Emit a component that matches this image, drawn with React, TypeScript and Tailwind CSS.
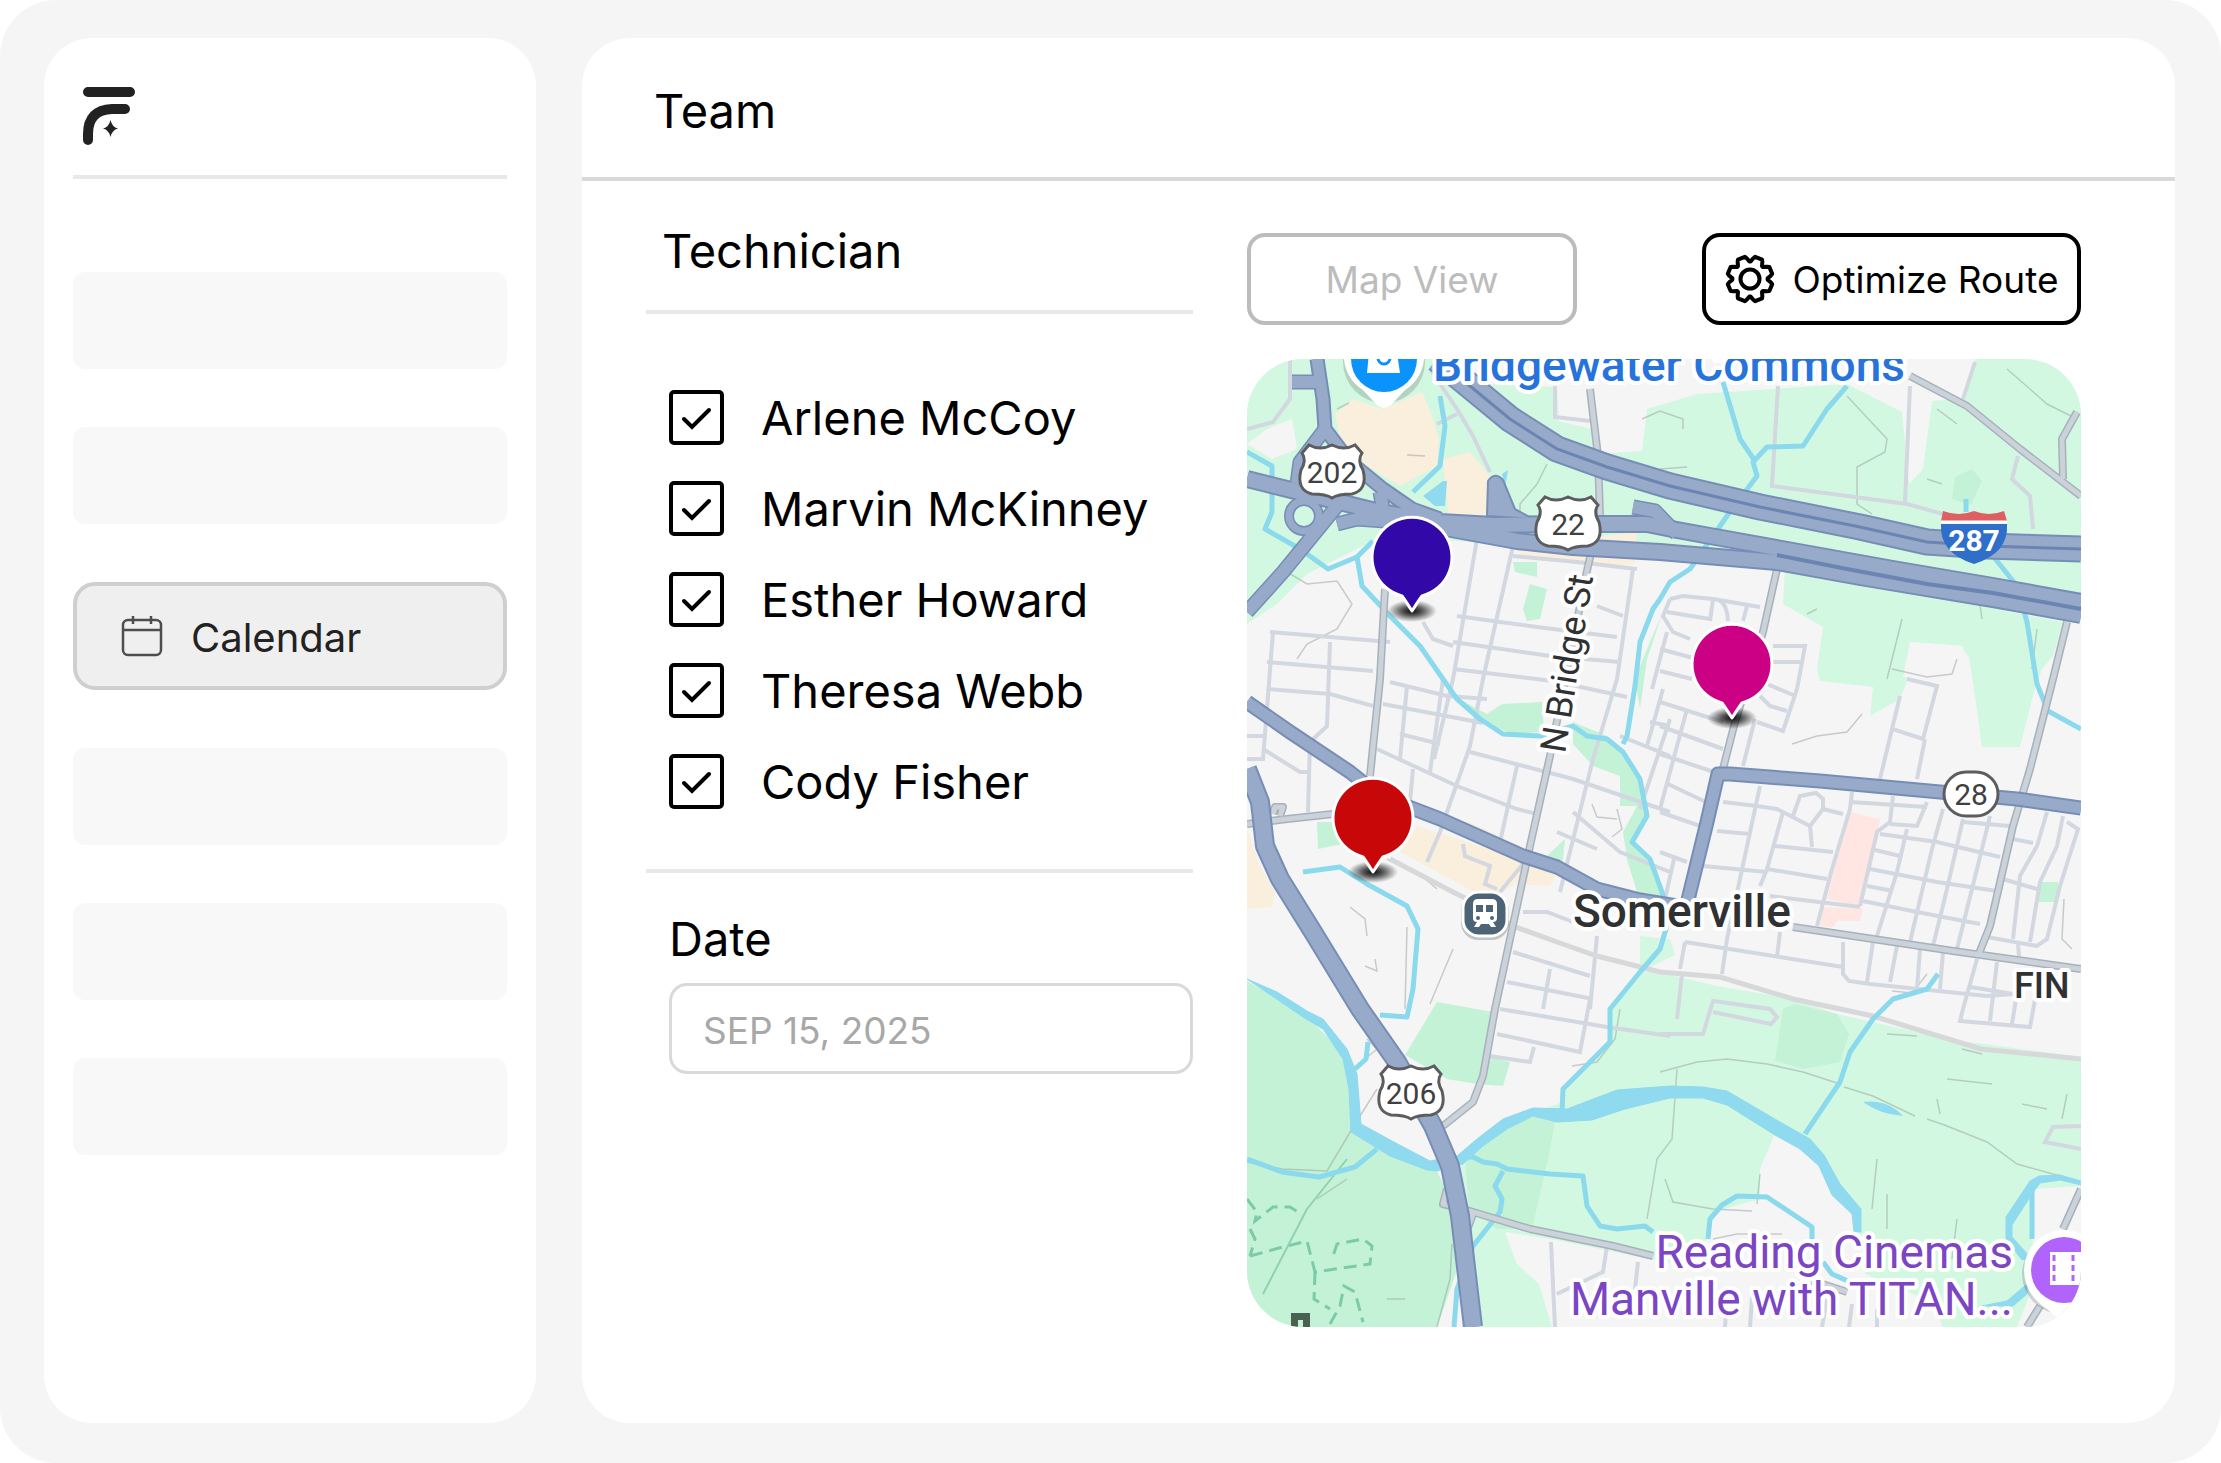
import { useState } from "react";

const technicians = ["Arlene McCoy", "Marvin McKinney", "Esther Howard", "Theresa Webb", "Cody Fisher"];

// Eight-tooth gear outline around (25, 25)
const gearPoints = Array.from({ length: 8 })
  .flatMap((_, i) =>
    [
      [-2, 17.6],
      [2, 17.6],
      [9, 21],
      [13, 22.8],
      [32, 22.8],
      [36, 21],
    ].map(([angle, r]) => {
      const a = ((angle + i * 45) * Math.PI) / 180;
      return `${(25 + r * Math.sin(a)).toFixed(2)},${(25 - r * Math.cos(a)).toFixed(2)}`;
    })
  )
  .join(" ");

const parks = [
  "M0,0 H190 L235,25 310,28 312,62 345,70 350,95 395,92 400,50 450,35 600,25 655,53 662,125 676,110 685,42 715,40 728,0 H834 V262 L700,240 560,215 430,200 330,190 180,180 130,180 60,215 30,245 0,265 Z",
  "M538,210 L680,237 816,263 806,297 795,310 787,333 773,388 735,388 727,330 722,298 713,287 663,283 661,320 653,340 623,357 626,328 573,322 570,310 576,268 536,245 Z",
  "M363,650 L393,612 420,615 470,627 546,640 590,655 700,680 834,698 V968 H225 L205,870 215,800 283,755 318,742 316,733 345,700 362,685 Z",
  "M393,577 L423,580 428,596 393,613 Z",
];

const deepParks = [
  "M0,622 L60,657 92,690 106,720 107,768 143,792 190,812 208,850 214,900 190,968 H0 Z",
  "M190,643 L246,653 240,697 263,703 256,727 230,725 200,720 158,696 Z",
  "M218,800 L260,765 310,752 301,800 285,870 250,870 222,850 Z",
  "M536,650 L548,645 590,655 602,675 593,703 556,710 528,702 Z",
  "M203,335 L240,355 255,345 295,343 297,373 265,375 230,360 Z",
  "M326,363 L360,377 376,393 398,430 401,460 386,487 410,510 416,538 390,533 380,500 376,473 390,447 373,447 373,417 346,407 326,385 Z",
  "M70,463 H95 V485 L71,490 Z",
  "M266,203 H290 V218 L268,213 Z",
  "M283,225 L300,230 293,260 280,262 276,250 Z",
  "M708,118 L725,110 735,122 724,146 705,140 Z",
  "M393,350 L400,300 415,255 402,285 388,320 Z",
  "M300,497 L318,480 316,500 312,508 Z",
  "M791,523 H811 V543 H789 Z",
];

const clearings = [
  "M527,777 L555,790 575,805 605,855 613,875 618,915 690,945 695,968 305,968 292,925 270,905 258,873 303,880 403,900 430,905 460,880 466,853 513,840 513,810 Z",
  "M787,830 L834,827 V968 H770 L785,930 Z",
  "M108,768 L112,700 150,703 200,805 183,803 143,788 Z",
  "M0,85 L20,70 45,60 50,90 25,100 Z",
  "M663,283 L716,287 722,320 690,320 656,318 Z",
];

const shops = [
  "M88,55 L106,40 136,50 175,33 185,57 192,80 190,107 153,127 120,107 93,80 Z",
  "M196,100 L223,93 243,117 241,157 201,155 Z",
  "M170,467 L280,502 313,510 303,527 270,525 240,540 153,493 Z",
  "M200,463 L223,463 273,487 270,495 Z",
  "M0,470 L13,507 28,533 25,548 0,550 Z",
  "M270,187 L390,173 388,205 350,207 272,196 Z",
];

const hospital = [
  "M603,453 L633,460 626,500 613,547 580,540 592,490 Z",
  "M576,548 L616,550 613,562 590,562 586,568 573,567 Z",
];

const ponds = [
  "M176,137 L196,122 200,122 198,147 188,147 Z",
  "M616,743 Q640,740 656,757 Q632,755 616,743 Z",
  "M255,115 L261,111 258,128 Z",
];

const streams = [
  "M0,800 L35,813 72,818 108,808 130,790",
  "M213,798 L226,798 236,803 250,805 260,810 303,815 336,817 340,847 353,867 370,870 398,867 406,873",
  "M256,812 L248,827 255,840 253,853 226,887 210,930 207,968",
  "M600,27 L580,50 556,87 520,88 506,103 510,117 480,157 443,210 423,223 413,240 406,250 393,283 388,327 380,377 376,385",
  "M476,23 L493,80 508,102",
  "M0,93 L25,107 25,153 18,170 53,190 81,210 110,198 126,182",
  "M110,198 L115,227 143,257 173,287 196,320 210,340 233,360 256,375 293,377 326,367 340,377 360,380 376,393 393,420 400,457 385,483 403,500 415,533 422,560 413,590 393,613 363,650 363,683 316,730 315,753",
  "M56,513 L93,508 120,525 160,547 171,570 166,630 160,658 133,656",
  "M121,683 L119,700 108,710",
  "M193,37 L198,67 193,107 166,133",
  "M746,197 L770,227 780,263 790,325 801,352 834,370",
  "M719,140 V153",
  "M691,615 L680,630 646,640 626,660 603,693 593,723 558,775",
  "M461,880 L463,860 475,846 490,837 520,838 565,868 565,880",
  "M576,903 L585,915 603,923",
  "M785,830 V880",
];

const minorStreets = [
  "M23,273 L143,283 M20,303 L126,312 M26,273 L16,400 0,400 M83,283 L80,367 63,383 61,453",
  "M20,330 L83,335 126,347 M16,390 L53,413 63,413 M0,377 L16,377",
  "M230,180 L206,320 187,400 M266,187 L236,320 223,387 193,473 180,503",
  "M210,257 L290,268 370,278 M206,283 L303,297 373,303 M206,310 L306,322 380,338 M266,197 L330,203 390,210",
  "M350,247 L376,257 M386,210 L370,320 346,400 313,533 M176,263 L186,280 206,287",
  "M160,327 L153,400 M196,320 L183,413 M166,410 L163,443 M270,407 L253,483",
  "M143,323 L200,337 240,340 M136,345 L236,364 M130,390 L210,427 270,450 290,455 M153,375 L193,385",
  "M223,393 L326,420 423,453 M326,453 L373,493 423,513 M310,473 L350,490",
  "M416,330 L400,387 M403,363 L423,367 M373,377 L423,397 M393,450 L423,360",
  "M280,500 L253,533 M216,485 L218,497 243,507 238,525 250,530",
  "M413,343 L476,363 M413,367 L476,390 M413,395 L473,415 M421,425 L463,445 M413,453 L456,468 M413,493 L440,503",
  "M440,350 L413,450 M427,500 L418,540 M476,443 L510,447 530,450 563,467 565,488 M546,457 L553,437 569,434 576,440 576,450 563,467 M576,450 L596,455",
  "M513,427 L480,580 475,615 M536,453 L520,510 513,527 M470,472 L503,475 M528,487 L586,493 M520,510 L580,520 M456,507 L520,513 M523,537 L613,548",
  "M605,433 L603,450 585,510 570,567 M603,443 L680,448 M646,437 L643,463 630,473 613,547 M680,443 L670,467 L643,465",
  "M660,470 L650,513 630,577 M696,450 L685,490 663,583 M716,460 L700,530 686,587 M743,457 L730,510 710,590",
  "M633,475 L690,483 753,498 M628,491 L653,497 M623,510 L690,523 750,532 M620,527 L646,532 M616,542 L670,553 733,565 M716,463 L763,467",
  "M800,453 L790,487 773,517 766,580 M816,457 L810,487 793,523 783,583 M820,463 L831,470 813,527 800,580 790,587 740,578 M766,480 L786,484 M756,520 L790,530 M771,585 L772,597",
  "M438,583 L596,608 M438,583 L433,610 M533,573 L530,598 M596,583 L596,615 602,622 623,625 740,637 766,635 M626,583 L620,623 M650,587 L643,623 M673,590 L670,630 M696,593 L693,630",
  "M730,600 L716,650 713,662 783,668 790,630 M750,603 L743,662 M723,628 L766,635 M769,640 L765,665 M435,615 L430,660",
  "M508,360 L496,407 M510,363 L536,372 550,330 558,287 526,287 M513,337 L523,347 540,352 M526,303 L553,303 M520,325 L546,336",
  "M653,337 L645,370 676,380 690,327 660,320 M645,370 L633,420 M678,380 L670,420",
  "M423,240 L436,237 466,240 513,248 M420,253 L463,260 M423,240 L416,257 426,273 443,280 M466,240 L463,262 M466,240 Q480,240 481,262 M500,247 L496,262 M413,290 L450,300 M420,273 L405,330 M413,312 L445,320",
  "M266,593 L343,617 M260,623 L346,640 M350,577 L343,650 M303,610 L296,650 M276,553 L300,553 326,563 M253,650 L360,668 423,677 M250,675 L333,693 343,640 M243,697 L283,703 287,688",
  "M531,27 L525,127 L660,145 696,155 M663,27 L658,143 M728,3 L716,40 M771,97 L765,120 783,137 786,170 M308,27 V58 L343,62",
  "M183,10 L210,50 226,77 243,113 M43,0 V40 L26,63 0,70 M190,65 L210,55",
  "M413,675 L456,675 466,642 523,650 530,658 524,665 466,653 M834,790 L798,783 806,768 834,767",
  "M304,883 L308,968 M360,887 L356,913 310,935 M391,903 L388,930",
  "M480,940 L478,968 M505,938 L503,968 M580,940 L575,968 M605,945 L602,968 M630,950 V968",
];

const railways = [
  "M143,500 L206,533 240,550 266,567 310,583 350,597 413,613 473,618 546,640 626,657 734,690 834,700",
];

const arterials = [
  "M138,230 L133,320 123,417",
  "M343,30 L351,97 353,157 341,207",
  "M341,207 L303,397 283,487 263,580 248,650 236,717 226,743 196,767",
  "M530,210 L516,273 488,363 476,410",
  "M663,17 L720,47 773,90 834,137",
  "M830,53 L815,80 816,120",
  "M820,263 L806,320 783,410 766,467 743,567 731,597",
  "M546,568 L713,593 834,610",
  "M0,465 L40,460 86,455",
  "M26,455 L28,448 36,448 33,457",
  "M200,830 L196,845 216,850 283,870 366,887 406,897",
  "M226,855 L218,877",
  "M560,920 L600,933",
  "M834,830 L816,870 M793,947 L780,968",
];

const ramps = [
  "M90,147 L36,213 0,253",
  "M78,70 L53,103 50,125",
  "M45,23 H70",
  "M90,165 L110,160 153,163",
  "M133,133 L136,150",
  "M386,148 L408,152 430,175",
];

const highways = [
  "M70,0 L76,40 78,70 103,103 136,130 165,150 193,160",
  "M0,343 L43,373 103,413 133,437 193,460 276,497 310,508 350,530 393,541 430,547",
  "M440,545 L460,463 471,415 483,415 573,422 693,433 770,440 834,449",
];

const route22 = [
  "M0,120 L60,135 133,153 193,163 246,166 326,165 400,165 430,171 463,177 546,192 646,210 746,227 834,243",
  "M193,168 L270,182 326,188 413,193 530,203 613,218 746,240 834,256",
];

const i287 = "M190,0 L223,27 263,60 310,90 360,108 423,127 513,148 613,168 680,183 740,187 834,190";
const us206 = "M0,410 L13,443 18,487 33,520 66,573 113,650 150,703 186,767 203,807 213,857 226,968";

const reliefLines = [
  "M90,50 L102,44 M160,96 L178,97 M35,210 L60,225 90,222 105,245 90,270 60,285 50,300",
  "M300,105 L290,125 273,145 273,160 M395,60 L413,52 436,60 436,70 M440,108 L413,110",
  "M600,37 L640,80 638,93 610,108 610,145 625,155 M760,10 L800,45 830,60 M690,50 L710,65",
  "M103,548 L118,560 120,577 M118,607 L130,612 128,600 M206,590 L183,645 M160,568 L158,650 M140,500 L175,517 190,530",
  "M413,713 L450,703 480,700 520,705 556,713 590,724 M597,728 L626,737 668,757 M680,760 L700,767 740,783 770,805 813,817",
  "M418,820 L426,843 466,850 505,852 M513,815 L510,845 M466,880 L490,875 535,875",
  "M700,720 L745,725 M715,690 L735,695 M640,675 L670,677 M775,745 L800,750 M690,740 L693,755",
  "M645,632 L665,634 680,615 M645,310 L680,318 705,315 710,300 M545,385 L570,377 600,373 615,355",
  "M373,650 L368,680 350,703 325,707 M120,680 L130,690 118,700 M0,803 L35,810 80,812 108,765 130,730",
  "M370,450 L375,470 365,478 M345,445 L350,458 370,460 M430,710 L425,780 410,800 400,860",
  "M655,260 L645,300 640,320 M730,225 L735,260 M560,255 L570,250 M790,270 L785,310 M680,120 L695,125",
  "M817,540 L815,580 825,590 M205,885 L203,920 190,968 M140,940 L158,940 M100,820 L70,840",
  "M640,835 V870 M710,860 L705,900 M630,800 L625,850 M820,735 L815,760",
];

const trails = [
  "M0,840 L10,853 8,862 26,848 43,848 51,853",
  "M3,870 L8,880 3,897 M3,897 L36,888 60,882 68,913 123,905 125,887 116,880 90,885 85,900",
  "M68,913 L67,940 83,950 M83,965 L93,947 97,927 108,933 116,963",
];

const usShield =
  "M-30,-19 L-23,-27 Q-12,-21 0,-27 Q12,-21 23,-27 L30,-19 Q25,-12 31,-2 Q36,18 20,22 Q6,22 0,26 Q-6,22 -20,22 Q-36,18 -31,-2 Q-25,-12 -30,-19 Z";

function Shapes({ paths, className }: { paths: string[]; className: string }) {
  return (
    <g className={className}>
      {paths.map((d) => (
        <path key={d} d={d} />
      ))}
    </g>
  );
}

function Shield({ x, y, label }: { x: number; y: number; label: string }) {
  return (
    <g transform={`translate(${x} ${y})`}>
      <path d={usShield} className="fill-white stroke-[#5c5d5f] stroke-3" />
      <text y="11" textAnchor="middle" className="fill-[#3f4042] text-[30px]">
        {label}
      </text>
    </g>
  );
}

function Pin({ x, y, color }: { x: number; y: number; color: string }) {
  return (
    <g transform={`translate(${x} ${y})`}>
      <ellipse cy="54" rx="25" ry="11" fill="url(#pin-shadow)" />
      <path
        d="M-10,39 A40,40 0 1 1 10,39 Q7,43 0,54 Q-7,43 -10,39 Z"
        fill={color}
        className="stroke-white stroke-3 [stroke-linejoin:round]"
      />
    </g>
  );
}

function RouteMap() {
  return (
    <svg
      viewBox="0 0 834 968"
      role="img"
      aria-label="Map of Somerville"
      className="block h-auto w-full rounded-[56px] bg-[#f5f5f6] font-[Roboto,sans-serif]"
    >
      <defs>
        <radialGradient id="pin-shadow">
          <stop offset="0" stopColor="#000" stopOpacity="0.95" />
          <stop offset="0.4" stopColor="#000" stopOpacity="0.65" />
          <stop offset="1" stopColor="#000" stopOpacity="0" />
        </radialGradient>
      </defs>

      {/* Land */}
      <Shapes paths={parks} className="fill-[#d3f8e2]" />
      <Shapes paths={clearings} className="fill-[#f5f5f6]" />
      <Shapes paths={deepParks} className="fill-[#c4f2d6]" />
      <Shapes paths={shops} className="fill-[#faeedd]" />
      <Shapes paths={hospital} className="fill-[#ffe6e2]" />
      <Shapes paths={reliefLines} className="fill-none stroke-[#8d9a93]/45 stroke-[1.5]" />
      <Shapes paths={trails} className="fill-none stroke-[#7bcba8] stroke-3 [stroke-dasharray:13_7]" />
      <path d="M16,935 L60,850 M60,850 L100,800" className="fill-none stroke-[#8fd2b2] stroke-2" />

      {/* Roads and water */}
      <Shapes paths={minorStreets} className="fill-none stroke-[#d2d7e0] stroke-4" />
      <Shapes paths={railways} className="fill-none stroke-[#d7d8da] stroke-5" />
      <Shapes paths={streams} className="fill-none stroke-[#8bd9ec] stroke-5 [stroke-linejoin:round]" />
      <Shapes paths={ponds} className="fill-[#8fdaee]" />
      <path
        d="M0,620 L30,633 60,652 76,660 100,690 110,715 114,765 145,782 183,802 210,797 230,780 256,760 286,749 320,750 370,731 423,727 456,728 480,732 533,763 563,780 577,796 593,825 614,850 614,873 607,873 605,855 585,836 572,807 553,790 528,776 480,746 456,739 423,739 378,750 345,761 310,763 286,757 260,770 236,787 216,805 190,812 180,811 143,797 104,773 102,730 96,700 76,670 56,658 Z"
        className="fill-[#8fdaee] stroke-[#8fdaee] stroke-1"
      />
      <path
        d="M834,826 L813,821 793,824 785,835 765,866 765,878 783,898 775,901 759,880 759,858 783,822 792,817 813,816 834,822 Z M780,925 L780,935 766,947 735,947 760,942 Z"
        className="fill-[#8fdaee] stroke-[#8fdaee] stroke-1"
      />
      <Shapes paths={arterials} className="fill-none stroke-[#a7b1bb] stroke-8 [stroke-linejoin:round]" />
      <Shapes paths={arterials} className="fill-none stroke-[#cbd2d9] stroke-5 [stroke-linejoin:round]" />

      {/* Highways: casing, then fill, then median */}
      <circle cx="57" cy="157" r="15" className="fill-none stroke-[#768db5] stroke-10" />
      <Shapes paths={ramps} className="fill-none stroke-[#768db5] stroke-15 [stroke-linejoin:round]" />
      <Shapes paths={highways} className="fill-none stroke-[#768db5] stroke-15 [stroke-linejoin:round]" />
      <Shapes paths={route22} className="fill-none stroke-[#768db5] stroke-18 [stroke-linejoin:round]" />
      <path d={i287} className="fill-none stroke-[#768db5] stroke-27 [stroke-linejoin:round]" />
      <path d={us206} className="fill-none stroke-[#768db5] stroke-20 [stroke-linejoin:round]" />
      <path d="M240,157 L241,122 Q248,112 256,121 L268,150 286,160 Z" className="fill-[#97aac9] stroke-[#768db5] stroke-2" />
      <circle cx="57" cy="157" r="15" className="fill-none stroke-[#97aac9] stroke-7" />
      <Shapes paths={ramps} className="fill-none stroke-[#97aac9] stroke-12 [stroke-linejoin:round]" />
      <Shapes paths={highways} className="fill-none stroke-[#97aac9] stroke-11 [stroke-linejoin:round]" />
      <Shapes paths={route22} className="fill-none stroke-[#97aac9] stroke-14 [stroke-linejoin:round]" />
      <path d={i287} className="fill-none stroke-[#97aac9] stroke-23 [stroke-linejoin:round]" />
      <path d={us206} className="fill-none stroke-[#97aac9] stroke-16 [stroke-linejoin:round]" />
      <path d={i287} className="fill-none stroke-[#6c84b2] stroke-3" />
      <path d="M530,196 L600,210 680,225 746,234 834,250" className="fill-none stroke-[#6c84b2] stroke-4" />

      {/* Road shields */}
      <Shield x={85} y={113} label="202" />
      <Shield x={321} y={165} label="22" />
      <Shield x={164} y={734} label="206" />
      <rect x="697" y="413" width="54" height="44" rx="22" className="fill-white stroke-[#5c5d5f] stroke-3" />
      <text x="724" y="446" textAnchor="middle" className="fill-[#3f4042] text-[30px]">28</text>
      <path d="M696,152 Q712,158 727,152 Q742,158 757,152 L760,162 H694 Z" className="fill-[#dd5f62]" />
      <path d="M694,165 H760 Q762,194 727,205 Q692,194 694,165 Z" className="fill-[#2f6fca]" />
      <path d="M694,163 H760" className="stroke-white stroke-3" />
      <text x="727" y="192" textAnchor="middle" className="fill-white text-[30px] font-bold">287</text>

      {/* Places */}
      <circle cx="137" cy="3" r="41" className="fill-black/15" />
      <path d="M97,0 A40,40 0 0 0 116,31 L130,46 Q137,52 144,46 L158,31 A40,40 0 0 0 177,0 Z" className="fill-white" />
      <circle cx="137" cy="0" r="33" className="fill-[#0a93fa]" />
      <path d="M122,-6 H150 L153,14 H120 Z" className="fill-white" />
      <path d="M131,-1 A6,6 0 0 0 143,-1" className="fill-none stroke-[#0a93fa] stroke-3" />

      <rect x="214" y="534" width="48" height="47" rx="17" className="fill-black/20" />
      <rect x="216" y="533" width="44" height="44" rx="16" className="fill-[#4c6475] stroke-white stroke-3" />
      <path d="M231,540 H245 Q250,540 250,545 V559 Q250,563 246,563 L249,568 H244 L242,565 H234 L232,568 H227 L230,563 Q226,563 226,559 V545 Q226,540 231,540 Z" className="fill-white" />
      <path d="M229,546 H236 V553 H229 Z M239,546 H246 V553 H239 Z" className="fill-[#4c6475]" />
      <circle cx="231" cy="559" r="2" className="fill-[#4c6475]" />
      <circle cx="245" cy="559" r="2" className="fill-[#4c6475]" />

      <circle cx="815" cy="915" r="40" className="fill-black/15" />
      <path d="M777,911 A40,40 0 0 1 857,911 Q857,930 834,948 L817,965 800,950 Q777,935 777,911 Z" className="fill-white" />
      <circle cx="817" cy="911" r="33" className="fill-[#b164fb]" />
      <path d="M803,893 H834 V926 H803 Z" className="fill-white" />
      <path d="M807,896 V926 M826,896 V926" className="stroke-[#b164fb] stroke-3 [stroke-dasharray:6_4]" />

      <path d="M44,954 H63 V968 H56 V961 H51 V968 H44 Z" className="fill-[#4a6152]" />

      <g className="stroke-white stroke-8 [paint-order:stroke] [stroke-linejoin:round]">
        <text x="186" y="22" className="fill-[#2673dc] text-[46px] font-medium">Bridgewater Commons</text>
        <text x="326" y="568" className="fill-[#2f3133] text-[46px] font-medium">Somerville</text>
        <text x="767" y="639" className="fill-[#2f3133] text-[36px] font-medium">FIN</text>
        <text transform="translate(318 395) rotate(-81)" className="fill-[#2f3133] text-[36px]">N Bridge St</text>
        <text x="766" y="909" textAnchor="end" className="fill-[#7b45c4] text-[46px]">Reading Cinemas</text>
        <text x="766" y="956" textAnchor="end" className="fill-[#7b45c4] text-[46px]">Manville with TITAN...</text>
      </g>

      {/* Technician pins */}
      <Pin x={165} y={198} color="#3209a8" />
      <Pin x={485} y={305} color="#cb0085" />
      <Pin x={126} y={459} color="#c80808" />
    </svg>
  );
}

function Placeholder() {
  return <div className="h-[97px] rounded-xl bg-[#f8f8f8]" />;
}

export default function App() {
  const [checked, setChecked] = useState<string[]>(technicians);

  const toggle = (name: string) =>
    setChecked((prev) => (prev.includes(name) ? prev.filter((n) => n !== name) : [...prev, name]));

  return (
    <div className="flex min-h-screen gap-[46px] rounded-[56px] bg-[#f5f5f5] pt-[38px] pr-[46px] pb-10 pl-11 font-[Inter,sans-serif] text-black">
      {/* Sidebar */}
      <aside className="w-[492px] shrink-0 rounded-[48px] bg-white px-[29px]">
        <div className="flex h-[141px] items-start border-b-4 border-[#e8e8e8] pt-[49px] pl-[10px]">
          <svg width="52" height="58" viewBox="0 0 52 58" aria-label="Logo" className="text-[#222]">
            <path
              d="M5 5 H47 M42 22 H29 Q5 23 5 47 V53"
              fill="none"
              stroke="currentColor"
              strokeWidth="10"
              strokeLinecap="round"
            />
            <path d="M27.500 33 Q29 40 35 41.500 Q29 43 27.500 50 Q26 43 20 41.500 Q26 40 27.500 33 Z" fill="currentColor" />
          </svg>
        </div>
        <nav className="mt-[93px] flex flex-col gap-[58px]">
          <Placeholder />
          <Placeholder />
          <a
            href="#calendar"
            className="flex h-[108px] items-center gap-7 rounded-[22px] border-4 border-[#cfcfcf] bg-[#efefef] pl-[44px] text-[40px] text-[#222]"
          >
            <svg width="42" height="42" viewBox="0 0 42 42" fill="none" className="stroke-[#4d4d4d] stroke-[2.5]">
              <rect x="2" y="5" width="38" height="35" rx="5" />
              <path d="M2 15 H40 M12 1 V9 M30 1 V9" />
            </svg>
            <span className="pt-1">Calendar</span>
          </a>
          <Placeholder />
          <Placeholder />
          <Placeholder />
        </nav>
      </aside>

      {/* Main panel */}
      <main className="flex-1 rounded-[48px] bg-white">
        <header className="flex h-[143px] items-center border-b-4 border-[#d9d9d9] pt-2 pl-[72px]">
          <h1 className="text-[47px]">Team</h1>
        </header>

        <div className="flex gap-[54px] pr-[94px] pl-16">
          <section className="w-[547px] shrink-0">
            <h2 className="flex h-[133px] items-center border-b-4 border-[#e8e8e8] pt-4 pb-1 pl-4 text-[47px]">Technician</h2>

            <ul className="flex flex-col gap-9 border-b-4 border-[#e8e8e8] pt-[76px] pb-[60px] pl-[23px]">
              {technicians.map((name) => (
                <li key={name}>
                  <label className="flex h-[55px] items-center gap-[37px] text-[47px] whitespace-nowrap">
                    <span className="relative size-[55px] shrink-0">
                      <input
                        type="checkbox"
                        checked={checked.includes(name)}
                        onChange={() => toggle(name)}
                        className="peer block size-full appearance-none rounded-[5px] border-4 border-black"
                      />
                      <svg
                        viewBox="0 0 55 55"
                        fill="none"
                        className="pointer-events-none invisible absolute inset-0 stroke-black stroke-4 peer-checked:visible"
                      >
                        <path d="M15 29 L23 37 L40 20" strokeLinecap="round" />
                      </svg>
                    </span>
                    <span className="pt-0.5">{name}</span>
                  </label>
                </li>
              ))}
            </ul>

            <div className="pt-9 pl-[23px]">
              <label htmlFor="date" className="block text-[47px] leading-[60px]">
                Date
              </label>
              <input
                id="date"
                type="text"
                defaultValue="SEP 15, 2025"
                className="mt-[14px] h-[91px] w-full rounded-[18px] border-3 border-[#d9d9d9] px-[31px] pt-1 text-[37px] text-[#a8a8a8]"
              />
            </div>
          </section>

          <section className="min-w-0 flex-1 pt-[52px]">
            <div className="flex justify-between">
              <button className="h-[92px] w-[330px] rounded-[18px] border-4 border-[#bcbcbc] pt-0.5 text-[37px] text-[#bcbcbc]">
                Map View
              </button>
              <button className="flex h-[92px] w-[379px] items-center justify-center gap-[18px] rounded-[18px] border-4 border-black text-[37px]">
                <svg width="50" height="50" viewBox="0 0 50 50" fill="none" className="stroke-black stroke-4 [stroke-linejoin:round]">
                  <polygon points={gearPoints} />
                  <circle cx="25" cy="25" r="9.500" />
                </svg>
                <span className="pt-0.5">Optimize Route</span>
              </button>
            </div>
            <div className="mt-[34px]">
              <RouteMap />
            </div>
          </section>
        </div>
      </main>
    </div>
  );
}
